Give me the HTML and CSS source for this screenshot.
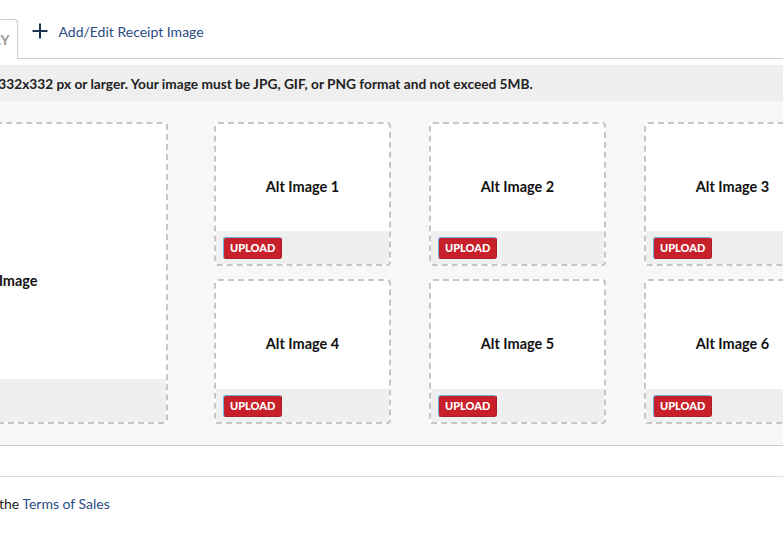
FILE: index.html
```html
<!DOCTYPE html>
<html lang="en">
<head>
  <meta charset="UTF-8">
  <title>Product Images</title>
  <link rel="stylesheet" href="styles.css">
</head>
<body>
  <div class="page">

    <div class="tabs">
      <div class="tab active">PRODUCT GALLERY</div>
      <a class="tab-link" href="#">
        <svg class="plus" width="16" height="16" viewBox="0 0 16 16">
          <path d="M8 0.5v15M0.5 8h15" stroke="#1e3350" stroke-width="2" fill="none"/>
        </svg>
        Add/Edit Receipt Image
      </a>
    </div>

    <div class="info">Images should be 332x332 px or larger. Your image must be JPG, GIF, or PNG format and not exceed 5MB.</div>

    <div class="panel">
      <div class="card main">
        <div class="card-body"><span class="label">Main Image</span></div>
        <div class="card-foot"></div>
      </div>

      <div class="alt-grid">
        <div class="card">
          <div class="card-body"><span class="label">Alt Image 1</span></div>
          <div class="card-foot"><button class="upload">UPLOAD</button></div>
        </div>
        <div class="card">
          <div class="card-body"><span class="label">Alt Image 2</span></div>
          <div class="card-foot"><button class="upload">UPLOAD</button></div>
        </div>
        <div class="card">
          <div class="card-body"><span class="label">Alt Image 3</span></div>
          <div class="card-foot"><button class="upload">UPLOAD</button></div>
        </div>
        <div class="card">
          <div class="card-body"><span class="label">Alt Image 4</span></div>
          <div class="card-foot"><button class="upload">UPLOAD</button></div>
        </div>
        <div class="card">
          <div class="card-body"><span class="label">Alt Image 5</span></div>
          <div class="card-foot"><button class="upload">UPLOAD</button></div>
        </div>
        <div class="card">
          <div class="card-body"><span class="label">Alt Image 6</span></div>
          <div class="card-foot"><button class="upload">UPLOAD</button></div>
        </div>
      </div>
    </div>

    <div class="spacer"></div>

    <p class="terms">By listing this item you agree to the <a href="#">Terms of Sales</a></p>

  </div>
</body>
</html>
```

FILE: styles.css
```css
body {
  margin: 0;
  font-family: Lato, "Liberation Sans", sans-serif;
  color: #1a1a1a;
  background: #fff;
  overflow: hidden;
}

.page {
  margin-left: -200px;
  width: 1100px;
}

/* tabs */
.tabs {
  display: flex;
  align-items: flex-end;
  padding-top: 18px;
  padding-left: 64px;
  border-bottom: 1px solid #cfcfcf;
}

.tab {
  height: 39px;
  line-height: 40px;
  padding: 0 7px 0 14px;
  border: 1px solid #cfcfcf;
  border-bottom: none;
  border-radius: 4px 4px 0 0;
  background: #fff;
  margin-bottom: -1px;
  font-size: 14px;
  font-weight: 700;
  color: #9a9a9a;
}

.tab-link {
  display: flex;
  align-items: center;
  gap: 11px;
  height: 40px;
  padding-left: 14px;
  padding-bottom: 14px;
  box-sizing: border-box;
  font-size: 14px;
  color: #2c4a84;
  text-decoration: none;
}

.plus {
  display: block;
}

/* info bar */
.info {
  margin-top: 6px;
  height: 36px;
  line-height: 37px;
  padding-left: 90px;
  background: #efefef;
  font-size: 13.7px;
  font-weight: 700;
  color: #222;
}

/* image panel */
.panel {
  display: flex;
  gap: 46px;
  padding: 21px 0 21px 32px;
  background: #f7f7f7;
  border-bottom: 1px solid #cccccc;
}

.alt-grid {
  display: grid;
  grid-template-columns: repeat(3, 177px);
  grid-template-rows: 144px 145px;
  column-gap: 38px;
  row-gap: 13px;
}

.card {
  display: flex;
  flex-direction: column;
  border: 2px dashed #c6c6c6;
  border-radius: 4px;
  background: #fff;
  box-sizing: border-box;
  overflow: hidden;
}

.card.main {
  width: 336px;
  height: 302px;
}

.card-body {
  flex: 1;
  text-align: center;
  padding-top: 52px;
}

.card.main .card-body {
  padding-top: 146px;
}

.label {
  font-size: 14.5px;
  font-weight: 700;
  color: #111;
}

.card-foot {
  height: 33px;
  padding: 5px 0 0 7px;
  box-sizing: border-box;
  background: #efefef;
}

.card.main .card-foot {
  height: 43px;
}

.upload {
  height: 22px;
  padding: 0 6px;
  font-family: Lato, "Liberation Sans", sans-serif;
  font-size: 11px;
  font-weight: 900;
  color: #fff;
  background: #c8202a;
  border: 1px solid #b01c24;
  border-top-color: #6cb4dc;
  border-left-color: #6cb4dc;
  border-radius: 3px;
}

.spacer {
  height: 30px;
  border-bottom: 1px solid #dcdcdc;
}

.terms {
  margin: 0;
  padding: 18px 0 0 3px;
  font-size: 14px;
  color: #1a1a1a;
}

.terms a {
  color: #2c4a84;
  text-decoration: none;
}
```
